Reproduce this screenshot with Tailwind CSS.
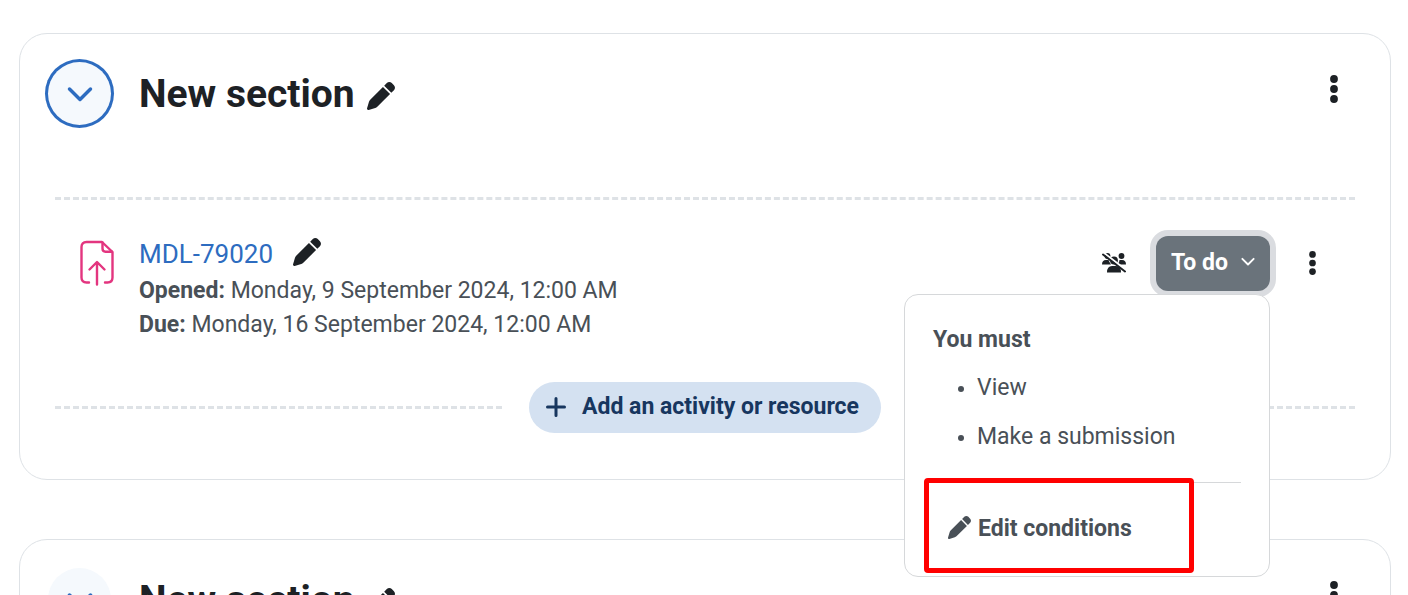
<!DOCTYPE html>
<html lang="en">
<head>
    <meta charset="utf-8">
    <meta name="viewport" content="width=device-width, initial-scale=1">
    <title>Course sections</title>
    <script src="https://cdn.jsdelivr.net/npm/@tailwindcss/browser@4"></script>
</head>
<body class="h-screen overflow-hidden bg-white font-[Roboto,sans-serif] text-[23px] leading-[34px] text-[#495057]">
    <!-- Shared icons -->
    <svg class="hidden">
        <symbol id="pen" viewBox="0 0 512 512">
            <path d="M362.7 19.3L314.3 67.7 444.3 197.7l48.4-48.4c25-25 25-65.5 0-90.5L453.3 19.3c-25-25-65.5-25-90.5 0zm-71 71L58.6 323.5c-10.4 10.4-18 23.3-22.2 37.4L1 481.2C-1.5 489.7 .8 498.8 7 505s15.3 8.5 23.7 6.1l120.3-35.4c14.1-4.2 27-11.8 37.4-22.2L421.7 220.3 291.7 90.3z"/>
        </symbol>
        <symbol id="dots" viewBox="0 0 8 28">
            <circle cx="4" cy="4" r="3.9"/><circle cx="4" cy="14" r="3.9"/><circle cx="4" cy="24" r="3.9"/>
        </symbol>
        <symbol id="chevron" viewBox="0 0 26 16">
            <path d="M2.500 3l10.500 10.500L23.500 3" fill="none" stroke="currentColor" stroke-width="3.500" stroke-linecap="round" stroke-linejoin="round"/>
        </symbol>
    </svg>

    <main class="flex flex-col gap-[59px] pt-[33px] pr-[17px] pl-[19px]">
        <section class="rounded-[28px] border border-[#dee2e6] pt-7 pb-[46px]">
            <header class="flex items-start px-7 text-[#1d2125]">
                <button aria-label="Collapse" class="flex size-[63px] shrink-0 items-center justify-center rounded-full bg-[#f5f9fd] text-[#2d6cc0] ring-3 ring-[#2d6cc0]">
                    <svg class="h-4 w-[26px]"><use href="#chevron"/></svg>
                </button>
                <div class="ml-7 flex h-[63px] items-center gap-3">
                    <h3 class="text-[39px] leading-[48px] font-bold">New section</h3>
                    <a href="#" aria-label="Edit section name" class="mt-1"><svg class="size-7 fill-current"><use href="#pen"/></svg></a>
                </div>
                <button aria-label="Section menu" class="ml-auto flex h-[53px] w-14 items-center justify-center">
                    <svg class="h-7 w-2 fill-current"><use href="#dots"/></svg>
                </button>
            </header>

            <div class="mx-[35px] mt-[72px]">
                <hr class="border-t-3 border-dashed border-[#dee2e6]">

                <!-- Activity -->
                <div class="mt-[34px] flex items-start pr-[25px] pl-[25px]">
                    <svg class="mt-1.5 h-[46px] w-[34px] shrink-0" viewBox="0 0 34 46" fill="none" stroke="#e3357f" stroke-width="2.4" stroke-linecap="round" stroke-linejoin="round">
                        <path d="M9 42.500H6.500Q1.500 42.500 1.500 37.500V7Q1.500 2 6.500 2H22L32.500 12V37.500Q32.500 42.500 27.500 42.500H25"/>
                        <path d="M22.500 2.500V8.500Q22.500 11.700 25.500 11.700H32"/>
                        <path d="M17 44.500V22.500M9.500 29.500L17 22L24.500 29.500"/>
                    </svg>
                    <div class="ml-[25px]">
                        <div class="flex h-10 items-center gap-5">
                            <a href="#" class="text-[26px] text-[#2d6cc0]">MDL-79020</a>
                            <a href="#" aria-label="Edit title" class="mb-1 text-[#1d2125]"><svg class="size-7 fill-current"><use href="#pen"/></svg></a>
                        </div>
                        <p><strong>Opened:</strong> Monday, 9 September 2024, 12:00 AM</p>
                        <p><strong>Due:</strong> Monday, 16 September 2024, 12:00 AM</p>
                    </div>

                    <div class="mt-0.5 ml-auto flex items-center">
                        <button aria-label="No groups" class="mr-[30px] mb-0.5">
                            <svg class="h-[22px] w-6" viewBox="0 0 24 22" fill="#1d2125">
                                <circle cx="5.500" cy="4" r="2.900"/><circle cx="19.500" cy="4" r="2.900"/><circle cx="12" cy="8.500" r="3.900"/>
                                <path d="M0 12.500Q0 8 4 8H6.500Q7.500 10.500 9 12.500ZM24 12.500Q24 8 20 8H17.500Q17.500 10.500 15.500 12.500ZM5 20.500Q5 14 10 14H14Q19 14 19 20.500Z"/>
                                <path d="M2 1L24 18" stroke="#fff" stroke-width="2"/>
                                <path d="M1 2.500L23 19.500" stroke="#1d2125" stroke-width="2" stroke-linecap="round"/>
                            </svg>
                        </button>
                        <div class="relative">
                            <button aria-expanded="true" class="flex h-[55px] w-[114px] items-center justify-between rounded-xl bg-[#6a737b] px-[15px] pb-0.5 font-bold text-white ring-6 ring-[#dadce0]">
                                To do
                                <svg class="mb-0.5 h-[9px] w-[14px]"><use href="#chevron"/></svg>
                            </button>

                            <!-- Completion dropdown -->
                            <div class="absolute top-full right-0 z-10 mt-[3px] w-[366px] rounded-[14px] border border-[#d6d8da] bg-white px-7 pt-7 pb-[22px]">
                                <strong class="block">You must</strong>
                                <ul class="mt-[14px] flex list-disc flex-col gap-[15px] pl-11 marker:text-[20px]">
                                    <li>View</li>
                                    <li>Make a submission</li>
                                </ul>
                                <hr class="mt-7 border-[#d6d8da]">
                                <div class="relative mt-5">
                                    <a href="#" class="flex h-[51px] items-center gap-[7px] pl-[15px] font-bold">
                                        <svg class="mb-0.5 size-[23px] fill-current"><use href="#pen"/></svg>
                                        Edit conditions
                                    </a>
                                    <span class="pointer-events-none absolute -top-[25px] -bottom-[19px] -left-[9px] w-[270px] rounded-[4px] border-5 border-[#ff0000]"></span>
                                </div>
                            </div>
                        </div>
                        <button aria-label="Activity menu" class="mb-0.5 ml-6 flex w-9 justify-center">
                            <svg class="h-6 w-[7px] fill-[#1d2125]"><use href="#dots"/></svg>
                        </button>
                    </div>
                </div>

                <div class="mt-10 flex items-center gap-[27px]">
                    <hr class="flex-1 border-t-3 border-dashed border-[#dee2e6]">
                    <button class="flex h-[51px] items-center gap-4 rounded-full bg-[#d4e1f1] pr-[22px] pb-0.5 pl-[17px] font-bold text-[#17365f]">
                        <svg class="size-5" viewBox="0 0 20 20" stroke="currentColor" stroke-width="3" stroke-linecap="round"><path d="M10 1.500V18.500M1.500 10H18.500"/></svg>
                        Add an activity or resource
                    </button>
                    <hr class="flex-1 border-t-3 border-dashed border-[#dee2e6]">
                </div>
            </div>
        </section>

        <section class="rounded-[28px] border border-[#dee2e6] pt-7 pb-[46px]">
            <header class="flex items-start px-7 text-[#1d2125]">
                <button aria-label="Collapse" class="flex size-[63px] shrink-0 items-center justify-center rounded-full bg-[#f5f9fd] text-[#2d6cc0]">
                    <svg class="h-4 w-[26px]"><use href="#chevron"/></svg>
                </button>
                <div class="ml-7 flex h-[63px] items-center gap-3">
                    <h3 class="text-[39px] leading-[48px] font-bold">New section</h3>
                    <a href="#" aria-label="Edit section name" class="mt-1"><svg class="size-7 fill-current"><use href="#pen"/></svg></a>
                </div>
                <button aria-label="Section menu" class="ml-auto flex h-[53px] w-14 items-center justify-center">
                    <svg class="h-7 w-2 fill-current"><use href="#dots"/></svg>
                </button>
            </header>
        </section>
    </main>
</body>
</html>
